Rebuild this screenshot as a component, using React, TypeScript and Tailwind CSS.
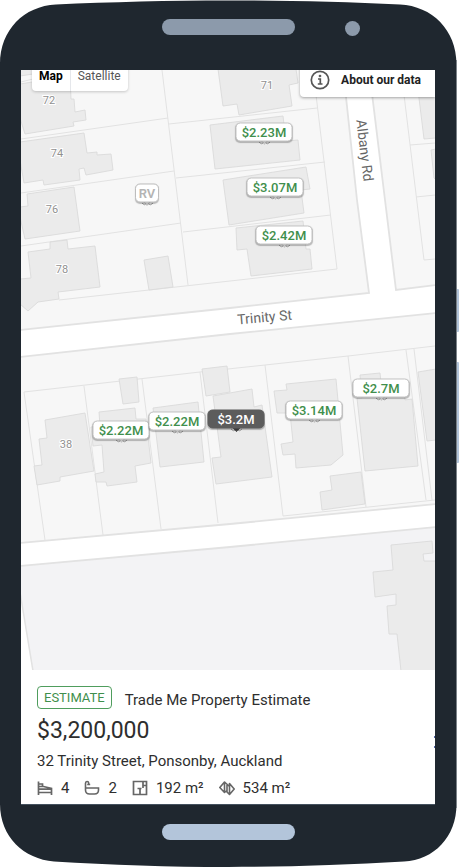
import React from "react"

interface Marker {
  id: string;
  label: string;
  x: number;
  y: number;
  variant: 'estimate' | 'selected' | 'rv';
}

interface MapLabel {
  text: string;
  x: number;
  y: number;
}

// Map drawing space, markers are placed in the same units
const MAP = { x: 21, y: 70, width: 414, height: 600 };

const MARKERS: Marker[] = [
  { id: '73', label: '$2.23M', x: 264, y: 132, variant: 'estimate' },
  { id: '75', label: '$3.07M', x: 275, y: 187, variant: 'estimate' },
  { id: '79', label: '$2.42M', x: 284, y: 235, variant: 'estimate' },
  { id: '76a', label: 'RV', x: 147, y: 193, variant: 'rv' },
  { id: '28', label: '$2.7M', x: 381, y: 388, variant: 'estimate' },
  { id: '30', label: '$3.14M', x: 314, y: 410, variant: 'estimate' },
  { id: '36', label: '$2.22M', x: 121, y: 430, variant: 'estimate' },
  { id: '34', label: '$2.22M', x: 177, y: 421, variant: 'estimate' },
  { id: '32', label: '$3.2M', x: 236, y: 419, variant: 'selected' },
];

const MARKER_STYLES = {
  estimate: { pill: 'w-[57px] border-[#c4c4c4] bg-white text-[#3f8f4c] font-medium', tail: 'border-[#c4c4c4] bg-white' },
  selected: { pill: 'w-[57px] border-[#5c5c5c] bg-[#5c5c5c] text-white font-medium', tail: 'border-[#4a4a4a] bg-[#4a4a4a]' },
  rv: { pill: 'w-6 border-[#bdbdbd] bg-white text-[#b4b4b4] font-semibold', tail: 'border-[#bdbdbd] bg-white' },
};

const HOUSE_NUMBERS: MapLabel[] = [
  { text: '71', x: 267, y: 89 },
  { text: '72', x: 49, y: 104 },
  { text: '74', x: 57, y: 157 },
  { text: '76', x: 52, y: 213 },
  { text: '78', x: 62, y: 273 },
  { text: '38', x: 66, y: 448 },
];

const BUILDINGS = [
  '20,69 33,69 33,74 20,76',
  '20,84 70,76 71,99 74,99 75,112 85,110 86,120 73,122 74,126 25,134 20,118',
  '20,142 84,133 87,153 97,152 97,155 111,154 113,170 86,175 84,168 79,169 80,180 44,185 43,180 24,183 20,160',
  '27,194 74,187 80,231 25,239 20,217 20,207 28,206',
  '28,252 50,249 50,242 67,240 68,249 95,246 100,287 58,292 59,299 38,302 28,311 20,304 20,279 31,278',
  '144,260 168,256 173,287 149,290',
  '218,69 223,106 237,104 239,115 292,106 289,85 298,83 296,69',
  '210,125 283,116 286,141 298,140 300,160 215,169',
  '223,180 306,167 310,189 301,190 304,213 229,225',
  '236,228 303,221 306,249 310,249 312,269 251,276 247,249 237,250',
  '418,90 424,139 436,138 436,90',
  '431,150 436,149 436,180 434,178',
  '119,379 137,377 139,402 123,404',
  '45,420 85,413 94,471 60,477 60,481 37,485 34,466 42,465 39,439 47,438',
  '99,412 135,408 136,419 146,419 151,463 135,466 137,482 107,486 106,482 96,482 95,474 104,472 102,445 93,446 91,427 100,426',
  '153,408 198,402 204,462 160,467',
  '213,396 252,389 254,407 262,405 272,477 216,484 212,458 221,457',
  '202,369 227,366 230,392 206,396',
  '274,391 287,390 286,384 336,379 343,455 331,465 296,468 295,454 283,455 281,444 293,442 290,413 277,413',
  '330,476 361,472 365,504 322,510 320,492 332,490',
  '360,375 380,373 382,392 404,390 405,400 412,399 418,466 365,471 357,398 362,398',
  '418,372 436,369 436,440 427,441',
  '391,545 432,541 433,553 423,554 424,561 436,561 436,671 401,671 397,634 389,634 387,606 396,605 396,594 375,597 373,572 393,570',
];

const PARCEL_LINES = [
  'M162 70 L188 285',
  'M21 139 L168 118',
  'M21 82 L33 79',
  'M169 124 L317 108',
  'M21 193 L174 171',
  'M176 178 L325 162',
  'M21 246 L181 223',
  'M183 232 L331 215',
  'M59 300 L230 281 L337 269 L313 70',
  'M401 70 L424 260 L435 259',
  'M410 145 L435 143',
  'M416 197 L435 195',
  'M45 540 L24 392 L200 372 L265 365 L348 356 L435 346',
  'M84 386 L103 535',
  'M142 379 L161 529',
  'M200 372 L218 523',
  'M265 365 L283 516',
  'M348 356 L366 507',
  'M406 350 L426 500',
  'M414 349 L432 500',
  'M283 516 L435 500',
];

const ROADS = [
  // Trinity St and Albany Rd
  'M20 330 L230 308 L369 293 L357 200 L343 69 L369 69 L385 200 L396 290 L436 285 L436 313 L230 334 L20 357 Z',
  'M20 543 L230 524 L436 504 L436 527 L230 547 L20 566 Z',
];

const PhoneBody = () => (
  <svg
    className="absolute inset-0 w-full h-full"
    viewBox="0 0 459 868"
    preserveAspectRatio="none"
    aria-hidden="true"
  >
    <rect x="454" y="289" width="5" height="43" rx="1" fill="#b3c5da" />
    <rect x="454" y="362" width="5" height="101" rx="1" fill="#b3c5da" />
    <path
      d="M0 64 C0 30 24 6 56 4.500 C110 2 170 0.500 228 0.500 C286 0.500 346 2 400 4.500 C432 6 456.500 30 456.500 64 L456.500 804 C456.500 837 434 860 404 861.500 C346 865 286 867 228 867 C170 867 110 865 54 861.500 C24 859 0 837 0 804 Z"
      fill="#1f272f"
    />
    <path d="M456.500 60 V808" stroke="#7b8288" strokeWidth="1" />
  </svg>
);

const MapCanvas = () => (
  <svg
    className="block w-full"
    viewBox={`${MAP.x} ${MAP.y} ${MAP.width} ${MAP.height}`}
    role="img"
    aria-label="Street map of Trinity St and Albany Rd"
  >
    <rect x="21" y="70" width="414" height="600" fill="#f7f7f7" />
    <path d="M20 566 L436 527 L436 671 L20 671 Z" fill="#f3f3f5" />
    <path d="M20 592 L33 671 L20 671 Z" fill="#ffffff" />
    <path d="M20 592 L33 671" stroke="#e2e2e2" strokeWidth="1.500" />
    <g fill="none" stroke="#e2e2e2" strokeWidth="1">
      {PARCEL_LINES.map((d) => <path key={d} d={d} />)}
    </g>
    <g fill="#ffffff" stroke="#e2e2e2" strokeWidth="1.800">
      {ROADS.map((d) => <path key={d} d={d} />)}
    </g>
    <g fill="#ebebeb" stroke="#dadada" strokeWidth="0.900">
      {BUILDINGS.map((points) => <polygon key={points} points={points} />)}
    </g>

    {/* Feet of the map symbols that show below the markers */}
    <g fill="none" stroke="#9a9a9a" strokeWidth="1">
      {MARKERS.map((m) => (
        <path key={m.id} d={`M${m.x - 5} ${m.y + 10} q2 3 5 1 M${m.x + 1} ${m.y + 11} q3 2 5 -1`} />
      ))}
    </g>

    <g className="font-[Roboto,sans-serif] text-[11px]" textAnchor="middle" fill="#909090" stroke="#ffffff" strokeWidth="2" paintOrder="stroke">
      {HOUSE_NUMBERS.map((n) => <text key={n.text} x={n.x} y={n.y}>{n.text}</text>)}
    </g>
    <g className="font-[Roboto,sans-serif] text-[14px]" textAnchor="middle" fill="#666666">
      <text transform="translate(265 322) rotate(-5)">Trinity St</text>
      <text transform="translate(360 151) rotate(83)">Albany Rd</text>
    </g>
  </svg>
);

const PriceMarker: React.FC<{ marker: Marker }> = ({ marker }) => {
  const styles = MARKER_STYLES[marker.variant];

  return (
    <button
      type="button"
      className="absolute -translate-x-1/2 -translate-y-1/2"
      style={{
        left: `${((marker.x - MAP.x) / MAP.width) * 100}%`,
        top: `${((marker.y - MAP.y) / MAP.height) * 100}%`,
      }}
    >
      <span className={`absolute left-1/2 -bottom-0.5 size-1.5 -translate-x-1/2 rotate-45 border-r border-b ${styles.tail}`} />
      <span className={`relative flex h-[19px] items-center justify-center rounded-[5px] border text-[13px] leading-none shadow-[0_1px_1px_rgba(0,0,0,0.25)] ${styles.pill}`}>
        {marker.label}
      </span>
    </button>
  );
};

const BedIcon = () => (
  <svg className="size-4" viewBox="0 0 16 16" fill="none" stroke="#666666" strokeWidth="1.700" aria-hidden="true">
    <path d="M1.500 1.500 V15 M1.500 12.500 H14.500 M14.500 15 V8.500 L6.500 6.500 H1.500 M1.500 9.200 H14.500 M1.500 4 H5.500 V6.500" />
  </svg>
);

const BathIcon = () => (
  <svg className="size-4" viewBox="0 0 16 16" fill="none" stroke="#666666" strokeWidth="1.600" aria-hidden="true">
    <path d="M1.500 8 H14.500 V10 C14.500 12.500 13 14 10.500 14 H5.500 C3 14 1.500 12.500 1.500 10 V3.200 C1.500 1 4.500 1 4.700 3 V4.200 M3.200 4.500 H6.200" />
  </svg>
);

const FloorAreaIcon = () => (
  <svg className="size-4" viewBox="0 0 16 16" fill="none" stroke="#666666" strokeWidth="1.700" aria-hidden="true">
    <path d="M5 14.500 H1.500 V1.500 H14.500 V14.500 H8 V8.500 M5.500 8.500 H9.500 M11 1.500 V8 M11 5.500 H14.500 M5 14.500 H8" />
  </svg>
);

const LandAreaIcon = () => (
  <svg className="size-4" viewBox="0 0 16 16" fill="none" stroke="#666666" strokeWidth="1.600" strokeLinejoin="round" aria-hidden="true">
    <path d="M5.500 2 V12.500 L0.800 7.500 Z M5.500 2 L10.500 6.500 M5.500 12.500 L8 10.500 M8 4 V12 L10.500 14.500 V3.500 L15.200 9 L10.500 14.500" />
  </svg>
);

const FEATURES = [
  { name: 'Bedrooms', value: '4', icon: BedIcon },
  { name: 'Bathrooms', value: '2', icon: BathIcon },
  { name: 'Floor area', value: '192 m²', icon: FloorAreaIcon },
  { name: 'Land area', value: '534 m²', icon: LandAreaIcon },
];

const PropertyMap = () => (
  <section className="relative overflow-hidden">
    <MapCanvas />
    {MARKERS.map((marker) => <PriceMarker key={marker.id} marker={marker} />)}

    <div className="absolute left-[11px] -top-2 flex h-[29px] rounded-sm bg-white font-[Roboto,sans-serif] text-xs shadow-[0_1px_3px_rgba(0,0,0,0.2)]">
      <button type="button" className="border-r border-gray-200 px-[7px] pb-0.5 font-bold text-black">Map</button>
      <button type="button" className="px-[7px] pb-0.5 text-[#565656]">Satellite</button>
    </div>

    <button
      type="button"
      className="absolute right-0 -top-2 flex h-[35px] items-center gap-[11px] rounded-bl-sm bg-white pl-2.5 pr-3.5 text-xs font-bold text-[#222222] shadow-[0_1px_3px_rgba(0,0,0,0.35)]"
    >
      <svg className="size-5" viewBox="0 0 20 20" fill="none" stroke="#555555" strokeWidth="1.700" aria-hidden="true">
        <circle cx="10" cy="10" r="8.700" />
        <path d="M8 9 H10.300 V14 M7.800 14 H12.500" />
        <circle cx="10" cy="6" r="0.500" />
      </svg>
      About our data
    </button>
  </section>
);

const EstimateCard = () => (
  <section className="relative bg-white px-4 pt-4 pb-1 text-[#2e2e2e]">
    <div className="flex items-start gap-[13px] pb-[5px]">
      <span className="flex h-[23px] items-center rounded border border-[#4f9d5d] px-1.5 text-[13px] leading-none text-[#3f8f4c]">
        ESTIMATE
      </span>
      <h2 className="pt-0.5 text-[15px] leading-6">Trade Me Property Estimate</h2>
    </div>
    <p className="text-[23px] leading-7">$3,200,000</p>
    <p className="mt-1 text-[15px] leading-6">32 Trinity Street, Ponsonby, Auckland</p>
    <ul className="mt-[3px] flex items-center gap-[15px] text-[15px] leading-6">
      {FEATURES.map((feature) => (
        <li key={feature.name} className="flex items-center gap-2">
          <feature.icon />
          <span>{feature.value}</span>
        </li>
      ))}
    </ul>
    {/* Carousel arrow, cut off by the screen edge */}
    <svg className="absolute right-0 top-16 h-4 w-px" viewBox="0 0 1 16" aria-hidden="true">
      <path d="M0 2 H1 V4 H0 Z M0 12 H1 V14 H0 Z" fill="#5468a8" />
    </svg>
  </section>
);

const App = () => {
  return (
    <main className="relative w-full bg-white font-[Roboto,sans-serif]">
      <PhoneBody />
      <div className="relative">
        <div className="grid h-[70px] grid-cols-[1fr_133px_1fr] items-start pt-[19px] pr-0.5">
          <span className="col-start-2 h-4 rounded-full bg-[#8c9aab]" />
          <span className="mt-0.5 ml-[50px] size-[15px] rounded-full bg-[#8c9aab]" />
        </div>
        <div className="ml-[21px] mr-6 border-b border-[#44515e]">
          <PropertyMap />
          <EstimateCard />
        </div>
        <div className="flex h-[63px] justify-center pt-[19px] pr-0.5">
          <span className="h-4 w-[133px] rounded-full bg-[#b3c5da]" />
        </div>
      </div>
    </main>
  );
};

export default App;
